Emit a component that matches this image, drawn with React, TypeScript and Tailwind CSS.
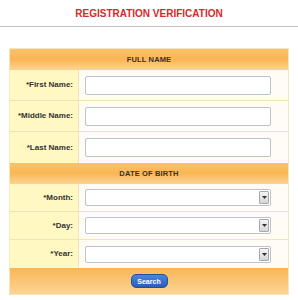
const font = { fontFamily: '"Liberation Sans", Arial, sans-serif' };

function TextRow({ label, last }: { label: string; last?: boolean }) {
  return (
    <div className={`flex h-[31px] ${last ? "" : "border-b border-[#efe3b8]"}`}>
      <div className="w-[69px] shrink-0 bg-[#fff8c2] border-r border-[#efe3b8] flex items-center justify-end pr-[5px] text-[8px] font-bold text-[#333]">
        {label}
      </div>
      <div className="flex-1 flex items-center pl-[6px] pr-[17px]">
        <input className="w-full h-[19px] bg-white border border-[#b9c3d3] rounded-[2px] outline-none" />
      </div>
    </div>
  );
}

function SelectRow({ label, last }: { label: string; last?: boolean }) {
  return (
    <div className={`flex h-[28px] ${last ? "" : "border-b border-[#efe3b8]"}`}>
      <div className="w-[69px] shrink-0 bg-[#fff8c2] border-r border-[#efe3b8] flex items-center justify-end pr-[5px] text-[8px] font-bold text-[#333]">
        {label}
      </div>
      <div className="flex-1 flex items-center pl-[6px] pr-[17px]">
        <div className="w-full h-[17px] bg-white border border-[#b9c3d3] rounded-[2px] flex justify-end items-center pr-[1px]">
          <div className="w-[10px] h-[13px] bg-gradient-to-b from-[#f4f4f4] to-[#d6d6d6] border border-[#a8a8a8] rounded-[1px] flex items-center justify-center">
            <svg width="5" height="3" viewBox="0 0 5 3">
              <path d="M0 0 L5 0 L2.5 3 Z" fill="#333" />
            </svg>
          </div>
        </div>
      </div>
    </div>
  );
}

function Header({ title }: { title: string }) {
  return (
    <div className="h-[21px] bg-gradient-to-b from-[#fbc26a] via-[#f9b654] to-[#fcd493] flex items-center justify-center text-[7.5px] font-bold text-[#333] tracking-[0.02em]">
      {title}
    </div>
  );
}

export default function App() {
  return (
    <div className="w-[298px] h-[300px] bg-white" style={font}>
      <div className="h-[27px] border-b border-[#c4c4c4] flex items-end justify-center pb-[5px]">
        <span className="text-[10px] font-bold text-[#d42a2a]">REGISTRATION VERIFICATION</span>
      </div>
      <div className="mx-[9px] mt-[21px] border border-[#f2e6c0] bg-[#fffdf3]">
        <Header title="FULL NAME" />
        <TextRow label="*First Name:" />
        <TextRow label="*Middle Name:" />
        <TextRow label="*Last Name:" last />
        <Header title="DATE OF BIRTH" />
        <SelectRow label="*Month:" />
        <SelectRow label="*Day:" />
        <SelectRow label="*Year:" last />
        <div className="h-[26px] bg-gradient-to-b from-[#f9b654] to-[#fcd493] flex items-center justify-center">
          <button className="w-[37px] h-[14px] rounded-[5px] bg-gradient-to-b from-[#4c86dc] to-[#2a5db8] border border-[#23509e] text-white text-[7px] font-bold leading-none">
            Search
          </button>
        </div>
      </div>
    </div>
  );
}
